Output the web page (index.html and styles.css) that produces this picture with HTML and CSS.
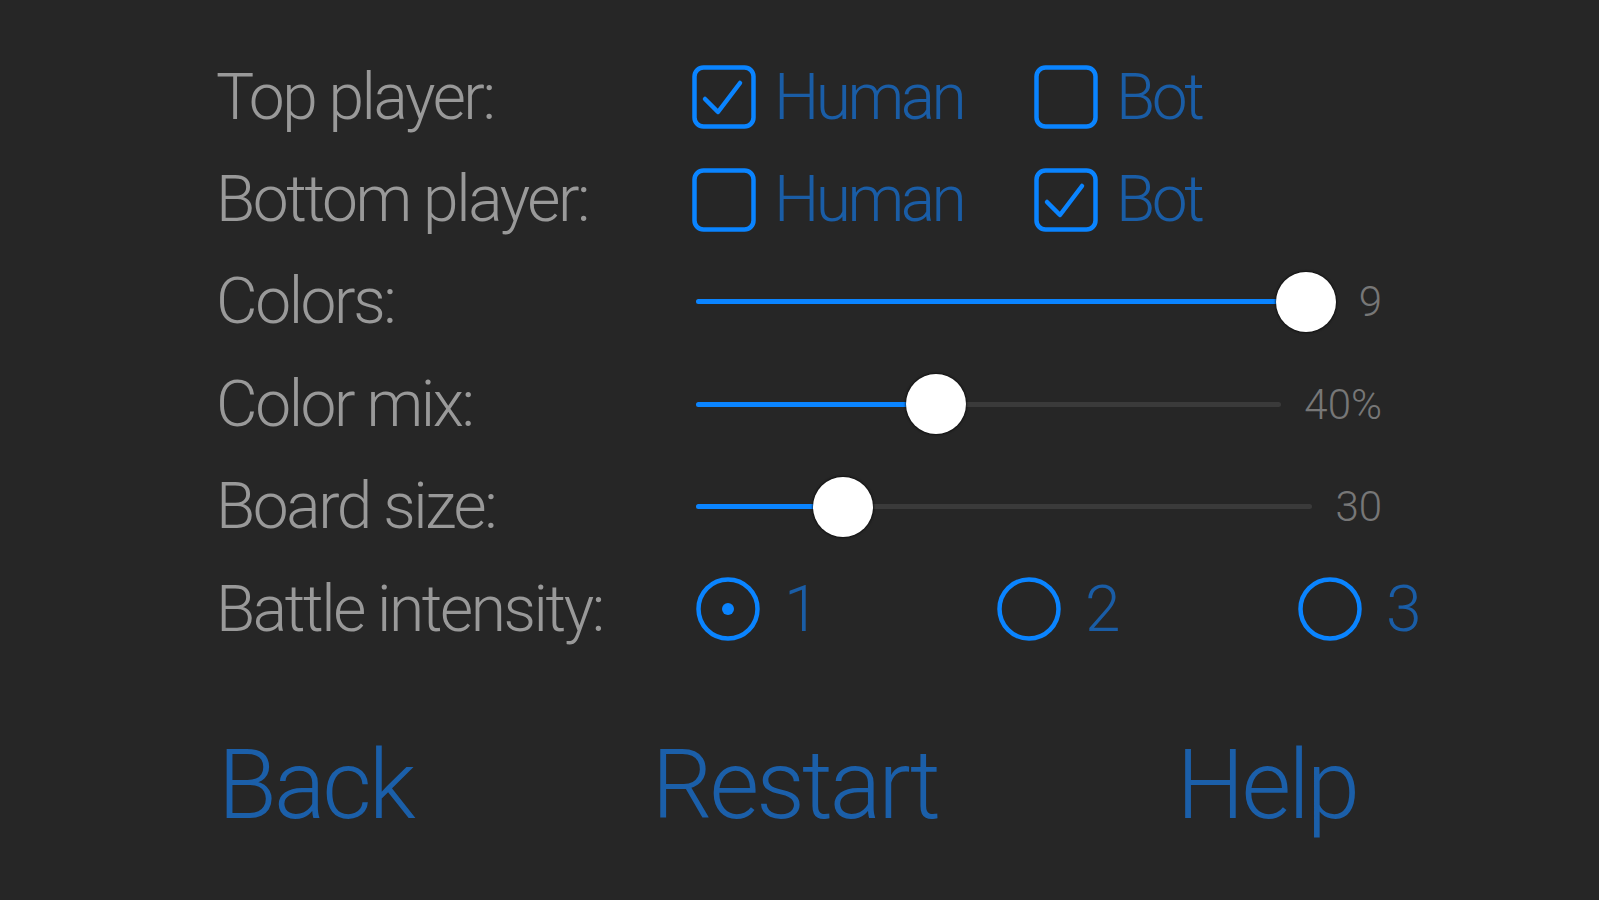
FILE: index.html
```html
<!DOCTYPE html>
<html lang="en">
<head>
<meta charset="utf-8">
<title>Settings</title>
<link rel="stylesheet" href="styles.css">
</head>
<body>
<main class="panel">
  <div class="row">
    <div class="label">Top player:</div>
    <div class="control choices">
      <label class="option check-option">
        <svg class="box" viewBox="0 0 64 64"><rect x="2.5" y="2.5" width="59" height="59" rx="9"/><path d="M13 34 L26 47 L48 18"/></svg>
        <span class="opt-text">Human</span>
      </label>
      <label class="option check-option">
        <svg class="box" viewBox="0 0 64 64"><rect x="2.5" y="2.5" width="59" height="59" rx="9"/></svg>
        <span class="opt-text">Bot</span>
      </label>
    </div>
  </div>
  <div class="row">
    <div class="label">Bottom player:</div>
    <div class="control choices">
      <label class="option check-option">
        <svg class="box" viewBox="0 0 64 64"><rect x="2.5" y="2.5" width="59" height="59" rx="9"/></svg>
        <span class="opt-text">Human</span>
      </label>
      <label class="option check-option">
        <svg class="box" viewBox="0 0 64 64"><rect x="2.5" y="2.5" width="59" height="59" rx="9"/><path d="M13 34 L26 47 L48 18"/></svg>
        <span class="opt-text">Bot</span>
      </label>
    </div>
  </div>
  <div class="row">
    <div class="label">Colors:</div>
    <div class="control slider">
      <div class="track" style="--p:1">
        <div class="fill"></div>
        <div class="thumb"></div>
      </div>
      <span class="value">9</span>
    </div>
  </div>
  <div class="row">
    <div class="label">Color mix:</div>
    <div class="control slider">
      <div class="track" style="--p:0.4">
        <div class="fill"></div>
        <div class="thumb"></div>
      </div>
      <span class="value">40%</span>
    </div>
  </div>
  <div class="row">
    <div class="label">Board size:</div>
    <div class="control slider">
      <div class="track" style="--p:0.21">
        <div class="fill"></div>
        <div class="thumb"></div>
      </div>
      <span class="value">30</span>
    </div>
  </div>
  <div class="row">
    <div class="label">Battle intensity:</div>
    <div class="control choices radios">
      <label class="option radio-option">
        <svg class="radio" viewBox="0 0 64 64"><circle cx="32" cy="32" r="29.5"/><circle class="dot" cx="32" cy="32" r="6"/></svg>
        <span class="opt-text">1</span>
      </label>
      <label class="option radio-option">
        <svg class="radio" viewBox="0 0 64 64"><circle cx="32" cy="32" r="29.5"/></svg>
        <span class="opt-text">2</span>
      </label>
      <label class="option radio-option">
        <svg class="radio" viewBox="0 0 64 64"><circle cx="32" cy="32" r="29.5"/></svg>
        <span class="opt-text">3</span>
      </label>
    </div>
  </div>
  <nav class="actions">
    <a class="action">Back</a>
    <a class="action">Restart</a>
    <a class="action">Help</a>
  </nav>
</main>
</body>
</html>
```
FILE: styles.css
```css
html, body {
  margin: 0;
  padding: 0;
  background: #262626;
  height: 100%;
}
body {
  font-family: Roboto, "Helvetica Neue", "Liberation Sans", sans-serif;
  font-weight: 300;
  overflow: hidden;
}
.panel {
  padding: 46px 0 0 216px;
  width: 1166px;
}
.row {
  display: flex;
  align-items: center;
  height: 102.4px;
}
.label {
  width: 476px;
  flex: none;
  font-size: 64px;
  letter-spacing: -2.4px;
  color: #999999;
  white-space: nowrap;
}
.control {
  flex: 1;
  display: flex;
  align-items: center;
}
.option {
  display: flex;
  align-items: center;
  gap: 18px;
  flex: none;
}
.check-option {
  width: 342px;
}
.radios {
  padding-left: 4px;
}
.radio-option {
  width: 301px;
  gap: 24px;
}
.opt-text {
  font-size: 64px;
  letter-spacing: -3.5px;
  color: #1a5da6;
}
.radio-option .opt-text {
  letter-spacing: 0;
}
.box, .radio {
  width: 64px;
  height: 64px;
  flex: none;
}
.box rect, .radio circle {
  fill: none;
  stroke: #0a84ff;
  stroke-width: 4.5;
}
.box path {
  fill: none;
  stroke: #0a84ff;
  stroke-width: 4.5;
  stroke-linecap: round;
  stroke-linejoin: round;
}
.radio .dot {
  fill: #0a84ff;
  stroke: none;
}
.slider {
  gap: 23px;
  padding-left: 4px;
}
.track {
  position: relative;
  flex: 1;
  height: 5px;
  border-radius: 3px;
  background: #3a3a3a;
}
.fill {
  position: absolute;
  left: 0;
  top: 0;
  bottom: 0;
  border-radius: 3px;
  background: #0a84ff;
  width: calc(var(--p) * (100% - 60px) + 30px);
}
.thumb {
  position: absolute;
  top: 50%;
  left: calc(var(--p) * (100% - 60px));
  width: 60px;
  height: 60px;
  margin-top: -30px;
  border-radius: 50%;
  background: #ffffff;
  box-shadow: 0 0 2px 1px rgba(0, 0, 0, 0.55);
}
.value {
  flex: none;
  font-size: 42px;
  letter-spacing: 0;
  color: #777777;
}
.actions {
  display: flex;
  justify-content: space-between;
  margin-top: 65px;
  padding-right: 25px;
  padding-left: 2px;
}
.action {
  font-size: 96px;
  line-height: 120px;
  letter-spacing: -3px;
  color: #1b5fa9;
  cursor: pointer;
}
```
